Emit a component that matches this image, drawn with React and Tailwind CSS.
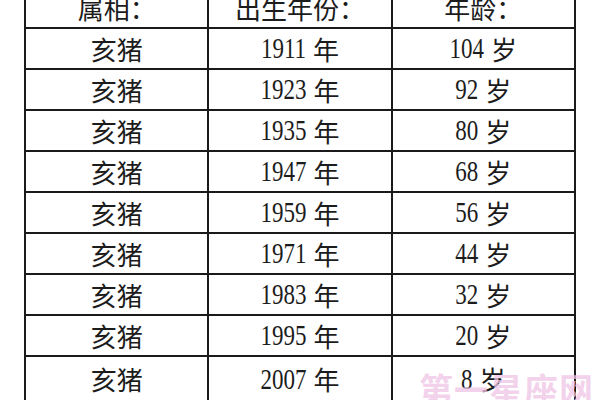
import React from 'react';

const rows = [
  ['1911', '104'],
  ['1923', '92'],
  ['1935', '80'],
  ['1947', '68'],
  ['1959', '56'],
  ['1971', '44'],
  ['1983', '32'],
  ['1995', '20'],
  ['2007', '8'],
];

const Num = ({ n, unit }) => (
  <span className="inline-flex items-center gap-[7px]">
    <span className="inline-block scale-y-[1.3] font-['Liberation_Serif',serif] text-[23px] leading-none">{n}</span>
    <span className="font-['Noto_Sans_CJK_SC',sans-serif] text-[26px] leading-none">{unit}</span>
  </span>
);

export default function App() {
  return (
    <div className="relative w-[600px] h-[400px] overflow-hidden bg-white text-[#1c1c1c]">
      <table className="ml-[24px] -mt-[14px] w-[552px] border-collapse table-fixed">
        <thead>
          <tr className="h-[41px]">
            {['属相：', '出生年份：', '年龄：'].map((h) => (
              <th
                key={h}
                className="border-2 border-[#1a1a1a] p-0 text-center font-normal text-[26px] leading-none font-['Noto_Sans_CJK_SC',sans-serif]"
              >
                {h}
              </th>
            ))}
          </tr>
        </thead>
        <tbody>
          {rows.map(([year, age], i) => (
            <tr key={year} className={i === rows.length - 1 ? 'h-[46px]' : 'h-[41px]'}>
              <td className="border-2 border-[#1a1a1a] p-0 text-center text-[26px] leading-none font-['Noto_Sans_CJK_SC',sans-serif]">
                亥猪
              </td>
              <td className="border-2 border-[#1a1a1a] p-0 text-center leading-none">
                <Num n={year} unit="年" />
              </td>
              <td className="border-2 border-[#1a1a1a] p-0 text-center leading-none">
                <Num n={age} unit="岁" />
              </td>
            </tr>
          ))}
        </tbody>
      </table>
      <div className="absolute left-[419px] top-[372px] text-[34px] font-bold tracking-[1px] text-[#f0c4e6] opacity-75 font-['Noto_Sans_CJK_SC',sans-serif] leading-none">
        第一星座网
      </div>
    </div>
  );
}
